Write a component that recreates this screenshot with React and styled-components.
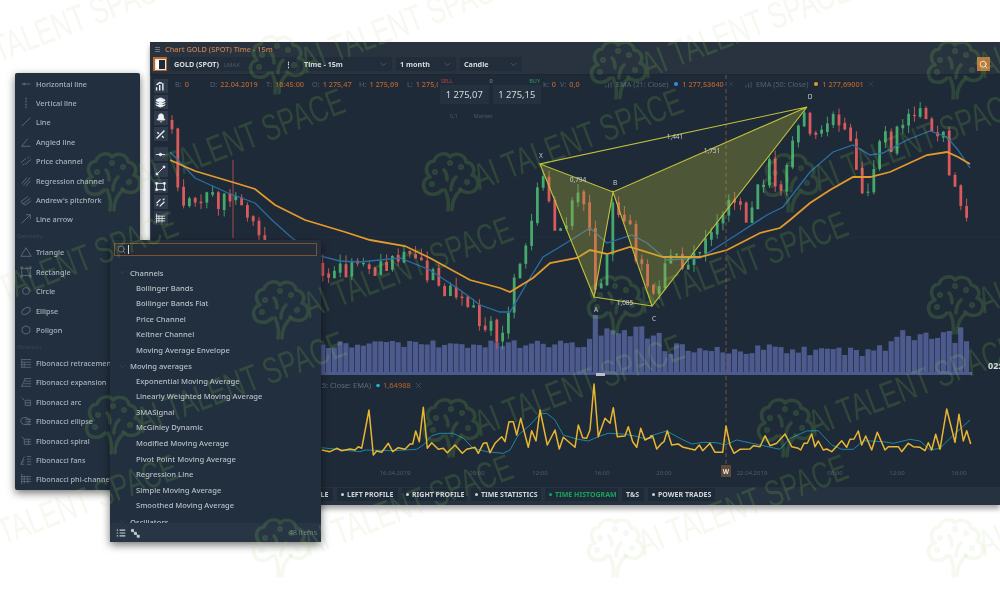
import React from 'react';
import styled, { createGlobalStyle, css } from 'styled-components';
import { Search, ChevronDown, X as XIcon, Bell, Layers } from 'lucide-react';

const Global = createGlobalStyle`
  html, body { margin: 0; padding: 0; background: #fff; }
  #root { width: 1000px; height: 600px; overflow: hidden; }
  * { box-sizing: border-box; }
`;

const Stage = styled.div`
  position: relative;
  width: 1000px;
  height: 600px;
  padding: 42px 0 0 150px;
  overflow: hidden;
  background: #fff;
  font-family: "Noto Sans", "Open Sans", sans-serif;
  filter: blur(0.5px);
`;

const Win = styled.div`
  width: 850px;
  height: 463px;
  display: flex;
  flex-direction: column;
  background: #1f2a38;
  box-shadow: 0 4px 5px rgba(0, 0, 0, 0.35);
`;
const TitleBar = styled.div`
  height: 12px;
  display: flex;
  align-items: center;
  gap: 5px;
  padding: 2px 0 0 5px;
  background: #28333f;
  color: #c9804e;
  font-size: 7.4px;
  font-weight: 500;
  white-space: nowrap;
`;
const Grip = styled.span`
  width: 5px;
  height: 5px;
  background: repeating-linear-gradient(#6b7582 0 1px, #28333f 1px 2px);
`;
const Toolbar = styled.div`
  height: 21px;
  display: flex;
  align-items: center;
  padding: 0 0 0 3px;
  background: #28333f;
  border-bottom: 1px solid #1c2632;
`;
const LogoBtn = styled.div`
  width: 14px;
  height: 14px;
  margin-right: 3px;
  background: #b9692f;
  display: flex;
  align-items: center;
  justify-content: center;
  &::after {
    content: '';
    width: 9px;
    height: 9px;
    background: linear-gradient(90deg, #fff 0 3px, #1f2a38 3px);
    border: 1px solid #f4e2d2;
  }
`;
const Select = styled.div`
  width: ${p => p.$w}px;
  margin-right: 4px;
  height: 14px;
  padding: 0 4px;
  display: flex;
  align-items: center;
  justify-content: space-between;
  background: #222d3b;
  color: #d6dade;
  font-size: 7.2px;
  font-weight: 700;
  white-space: nowrap;
  svg { color: #8b95a1; }
`;
const Dim = styled.span`
  color: #4f5b69;
  font-size: 6px;
  font-weight: 400;
  margin-left: 5px;
`;
const SearchBtn = styled.div`
  margin-left: auto;
  margin-right: 10px;
  width: 13px;
  height: 14px;
  background: #b9763f;
  color: #fff;
  display: flex;
  align-items: center;
  justify-content: center;
`;
const Body = styled.div`
  flex: 1;
  display: flex;
  min-height: 0;
`;
const Side = styled.div`
  width: 20px;
  display: flex;
  flex-direction: column;
  align-items: center;
  padding-top: 4px;
  border-left: 1px solid #3a4553;
`;
const ToolBtn = styled.div`
  width: 14px;
  height: 14px;
  margin-bottom: ${p => p.$gap || 2}px;
  background: #2f3b4b;
  color: #eef1f3;
  display: flex;
  align-items: center;
  justify-content: center;
`;
const Main = styled.div`
  flex: 1;
  display: flex;
  flex-direction: column;
  min-width: 0;
`;
const Plot = styled.div`
  position: relative;
  flex: 1;
  min-height: 0;
  svg.chart { display: block; }
`;
const Legend = styled.div`
  position: absolute;
  top: 3px;
  left: 5px;
  display: flex;
  align-items: center;
  height: 12px;
  font-size: 7.3px;
  color: #55626f;
  white-space: nowrap;
`;
const LegItem = styled.div`
  width: ${p => p.$w}px;
  flex: none;
  display: flex;
  align-items: center;
  gap: 3px;
  overflow: hidden;
`;
const Val = styled.span`
  color: #b9652c;
  font-weight: 500;
`;
const Dot = styled.i`
  width: 4px;
  height: 4px;
  border-radius: 50%;
  margin: 0 1px 0 3px;
  background: ${p => p.$c};
`;
const Widget = styled.div`
  position: absolute;
  left: 268px;
  top: 0;
  width: 105px;
  height: 47px;
  padding: 2px 2px 0;
  background: #1f2a38;
`;
const WTop = styled.div`
  display: flex;
  justify-content: space-between;
  padding: 0 1px;
  font-size: 5.5px;
  line-height: 8px;
  color: #8b95a1;
`;
const Sell = styled.span`color: #b8403f;`;
const Buy = styled.span`color: #2f9f62;`;
const WPrices = styled.div`
  display: flex;
  gap: 4px;
`;
const Price = styled.div`
  flex: 1;
  height: 19px;
  background: #26313f;
  color: #d5d9dd;
  font-size: 9.4px;
  line-height: 19px;
  text-align: center;
  white-space: nowrap;
`;
const WBottom = styled.div`
  display: flex;
  gap: 16px;
  padding: 8px 0 0 10px;
  font-size: 5.5px;
  color: #4d5966;
`;
const Tabs = styled.div`
  height: 18px;
  display: flex;
  align-items: flex-start;
  gap: 4px;
  background: #263240;
  padding: 1px 0 0 88px;
`;
const Tab = styled.div`
  width: ${p => p.$w}px;
  height: 13px;
  flex: none;
  display: flex;
  align-items: center;
  gap: 3px;
  padding: 0 0 0 4px;
  background: #1f2a38;
  font-size: 7px;
  font-weight: 700;
  white-space: nowrap;
  color: ${p => (p.$on ? '#15a45d' : '#cfd4d9')};
  &::before {
    content: '';
    display: ${p => (p.$plain ? 'none' : 'block')};
    width: 3px;
    height: 3px;
    border-radius: 50%;
    background: currentColor;
  }
`;

const Panel = styled.div`
  position: absolute;
  background: #222f3e;
  border-radius: 2px;
  box-shadow: 0 3px 9px rgba(0, 0, 0, 0.55);
  ${p => css`left: ${p.$x}px; top: ${p.$y}px; width: ${p.$w}px; height: ${p.$h}px;`}
`;
const DrawList = styled.div`
  padding-top: 1px;
  display: flex;
  flex-direction: column;
`;
const DrawItem = styled.div`
  height: 19.4px;
  display: flex;
  align-items: center;
  gap: 4px;
  padding-left: 5px;
  color: #aab3bc;
  font-size: 7.3px;
  font-weight: 500;
  white-space: nowrap;
  overflow: hidden;
  svg { flex: none; color: #5d6977; }
`;
const GroupLabel = styled.div`
  height: 13.6px;
  line-height: 14px;
  padding-left: 2px;
  font-size: 5.5px;
  color: #3b4857;
`;
const SearchBox = styled.div`
  height: 13px;
  margin: 3px 4px 0;
  display: flex;
  align-items: center;
  gap: 2px;
  padding-left: 2px;
  background: #232c37;
  border: 1px solid #7a5230;
  color: #7f8994;
  &::after {
    content: '';
    width: 1px;
    height: 9px;
    background: #d6dade;
  }
`;
const IndList = styled.div`
  height: 258px;
  margin-top: 9px;
  overflow: hidden;
`;
const Group = styled.div`
  height: 15.55px;
  display: flex;
  align-items: center;
  gap: 3px;
  padding-left: 8px;
  color: #b9c0c8;
  font-size: 7.6px;
  font-weight: 500;
  svg { color: #4d5966; }
`;
const Ind = styled.div`
  height: 15.55px;
  line-height: 15.55px;
  padding-left: 26px;
  color: #b8bfc7;
  font-size: 7.6px;
  font-weight: 500;
  white-space: nowrap;
`;
const Foot = styled.div`
  height: 19px;
  display: flex;
  align-items: center;
  gap: 4px;
  padding: 0 4px 0 6px;
  background: #283544;
  color: #c5ccd3;
`;
const Count = styled.span`
  margin-left: auto;
  color: #6f7b88;
  font-size: 7px;
`;

const Mark = styled.div`
  position: absolute;
  inset: 0;
  pointer-events: none;
  color: ${p => p.$c};
  mix-blend-mode: ${p => p.$blend};
`;
const MarkItem = styled.div`
  position: absolute;
  left: ${p => p.$x - 30}px;
  top: ${p => p.$y - 32}px;
  width: 60px;
  height: 64px;
`;
const MarkText = styled.span`
  position: absolute;
  left: 62px;
  top: 8px;
  font-family: "Liberation Sans", sans-serif;
  font-size: 37px;
  line-height: 40px;
  white-space: nowrap;
  transform-origin: 0 100%;
  transform: rotate(-21deg) scaleX(0.7);
`;

/* ---------- data ---------- */
function rng(seed) {
  let a = seed;
  return () => {
    a |= 0; a = (a + 0x6d2b79f5) | 0;
    let t = Math.imul(a ^ (a >>> 15), 1 | a);
    t = (t + Math.imul(t ^ (t >>> 7), 61 | t)) ^ t;
    return ((t ^ (t >>> 14)) >>> 0) / 4294967296;
  };
}
const lerp = (pts, x) => {
  if (x <= pts[0][0]) return pts[0][1];
  for (let i = 1; i < pts.length; i++) {
    if (x <= pts[i][0]) {
      const [a, b] = pts[i - 1], [c, d] = pts[i];
      return b + ((d - b) * (x - a)) / (c - a);
    }
  }
  return pts[pts.length - 1][1];
};
const pricePath = [[172,128],[176,170],[180,205],[190,205],[200,195],[215,200],[230,205],[245,205],[255,232],[270,250],[320,268],[340,272],[355,262],[375,272],[392,262],[410,250],[422,265],[440,285],[460,300],[480,320],[500,335],[507,325],[512,295],[522,250],[532,215],[540,165],[545,195],[552,215],[560,235],[568,225],[578,190],[585,215],[590,240],[595,295],[605,280],[610,225],[613,195],[620,215],[630,230],[640,265],[652,300],[662,280],[668,262],[680,262],[690,268],[700,252],[712,235],[722,215],[728,205],[740,205],[745,215],[755,195],[765,180],[770,165],[780,205],[787,165],[795,135],[800,125],[807,120],[812,130],[820,125],[830,125],[838,122],[848,130],[855,160],[860,180],[868,192],[875,165],[880,145],[887,135],[893,148],[900,125],[910,120],[915,118],[925,108],[930,118],[935,128],[940,150],[945,135],[948,165],[955,190],[963,210],[972,237]];
const orange = [[170,160],[195,171],[232,182],[255,189],[275,205],[305,220],[345,232],[370,240],[405,246],[430,258],[470,280],[500,288],[510,292],[533,278],[550,263],[577,258],[590,250],[607,254],[630,247],[663,257],[700,257],[727,250],[760,233],[780,228],[790,220],[810,203],[830,190],[853,177],[870,177],[890,172],[927,155],[947,152],[958,157],[970,164]];
const blue = [[170,152],[178,160],[195,178],[228,193],[255,203],[272,220],[292,238],[320,256],[340,261],[360,262],[400,258],[430,270],[460,290],[480,305],[500,312],[510,312],[527,283],[543,257],[563,245],[590,228],[607,243],[632,235],[647,243],[667,260],[700,258],[733,237],[767,215],[783,207],[790,198],[810,172],[833,152],[853,145],[870,155],[883,153],[907,140],[930,131],[947,137],[958,150],[970,168]];
const candles = [];
const vols = [];
{
  const r = rng(11);
  let prev = 120;
  for (let i = 0; i < 138; i++) {
    const x = 172 + i * 5.8;
    const c = lerp(pricePath, x) + (r() - 0.5) * 20;
    const hi = Math.min(prev, c) - r() * 9;
    const lo = Math.max(prev, c) + r() * 9;
    candles.push({ x, o: prev, c, hi, lo, up: c < prev });
    prev = c + (r() - 0.5) * 3;
    let h = 27 + r() * 8;
    if (x > 585 && x < 660) h = 36 + r() * 14;
    if (x > 660 && x < 800) h = 21 + r() * 11;
    if (x > 800 && x < 890) h = 18 + r() * 12;
    if (x > 890) h = 32 + r() * 16;
    if (Math.abs(x - 594) < 3) h = 60;
    vols.push({ x, h });
  }
}
const yellowA = [[35,240],[60,245],[80,235],[95,242],[120,237],[135,240],[145,230],[155,235],[177,120],[190,255],[200,243],[215,247],[235,220],[248,245],[265,233],[285,238],[300,222],[308,222],[317,183],[328,215],[340,112],[352,235],[365,218],[385,238],[400,235],[412,248],[435,225],[457,250],[470,238],[495,232],[505,250],[520,220],[530,218],[540,248],[555,220],[575,200],[585,215],[597,155],[610,155],[620,195],[632,145],[655,232],[665,182],[678,213],[690,120],[712,225],[735,180],[748,237],[760,202],[795,232],[805,165],[818,203],[830,205],[840,180],[852,42],[865,200],[885,145],[900,160],[910,113],[922,200],[945,198],[955,170],[968,215],[980,232],[992,175],[1005,210],[1028,198]];
const yellowB = [[0,198],[8,198],[20,237],[35,220],[42,215],[52,182],[65,225],[85,222],[100,232],[135,240],[148,225],[158,242],[180,220],[195,247],[218,247],[228,168],[240,225],[252,250],[270,238],[300,237],[310,227],[330,230],[345,197],[360,227],[380,220],[405,192],[425,230],[445,235],[452,240],[462,220],[472,220],[485,192],[495,230],[505,213],[520,240],[530,237],[545,245],[575,212],[590,232],[600,208],[612,207],[625,183],[635,225],[647,198],[665,240],[682,187],[705,240],[715,230],[745,230],[755,245],[775,220],[790,230],[810,232],[825,242],[835,218],[845,240],[857,193],[870,238],[890,117],[915,217],[927,133],[940,213],[950,182],[962,222]];
const tealA = [[35,233],[100,240],[150,245],[165,240],[250,242],[320,238],[340,225],[365,197],[390,190],[430,190],[460,205],[490,235],[530,245],[580,250],[600,240],[625,195],[660,165],[690,132],[710,130],[735,150],[760,195],[800,207],[835,213],[870,198],[895,190],[940,192],[975,198],[1000,205],[1028,205]];
const tealB = [[0,198],[50,183],[90,205],[125,222],[160,217],[200,218],[225,225],[260,210],[330,225],[390,238],[420,205],[470,183],[505,182],[545,225],[575,238],[610,238],[640,212],[700,215],[730,220],[780,208],[810,213],[840,240],[870,235],[900,205],[960,150]];
const toA = p => p.map(([x, y]) => `${(310 + x / 3).toFixed(1)},${(370 + y / 3).toFixed(1)}`);
const toB = p => p.map(([x, y]) => `${(650 + x / 3).toFixed(1)},${(370 + y / 3).toFixed(1)}`);
const pts = p => p.map(q => q.join(',')).join(' ');
const G = '#45a86d', R = '#d95a5a';

const axis = [[395,'16.04.2019'],[477,'08:00'],[540,'12:00'],[602,'16:00'],[664,'20:00'],[752,'22.04.2019'],[835,'08:00'],[897,'12:00'],[959,'16:00']];
const fibLabels = [[541,158,'X'],[596,312,'A'],[615,185,'B'],[654,321,'C'],[810,99,'D']];
const ratios = [[675,138.5,'1,441'],[712,152.5,'1,751'],[578,181.5,'0,794'],[625,305,'1,085']];

const Chart = () => (
  <svg className="chart" width="830" height="412" viewBox="170 75 830 412">
    <line x1="170" x2="1000" y1="237" y2="237" stroke="#263444" strokeWidth="0.6" />
    <g fill="#4d5a8e">
      {vols.map((v, i) => <rect key={i} x={v.x - 2.6} y={375 - v.h} width="5.1" height={v.h} />)}
      <rect x="170" y="372" width="802" height="3" />
    </g>
    <rect x="596" y="373" width="9" height="3" fill="#b9c0c8" />
    {candles.map((c, i) => (
      <g key={i} fill={c.up ? G : R} stroke={c.up ? G : R}>
        <line x1={c.x} x2={c.x} y1={c.hi} y2={c.lo} strokeWidth="0.9" />
        <rect x={c.x - 1.4} y={Math.min(c.o, c.c)} width="2.8" height={Math.abs(c.o - c.c) + 1} stroke="none" />
      </g>
    ))}
    <line x1="233" x2="233" y1="160" y2="238" stroke={R} strokeWidth="1" opacity="0.7" />
    <polyline points={pts(blue)} fill="none" stroke="#2a6fa3" strokeWidth="1.3" />
    <polyline points={pts(orange)} fill="none" stroke="#e39a2b" strokeWidth="1.8" />
    <line x1="726" x2="726" y1="75" y2="465" stroke="#7a5a44" strokeWidth="0.9" strokeDasharray="4 3" />
    <polygon points="540,164 594,297 613,192" fill="#b0b03a" fillOpacity="0.33" />
    <polygon points="613,192 652,306 807,107" fill="#b0b03a" fillOpacity="0.33" />
    <polyline points="540,164 594,297 613,192 652,306 807,107 613,192 540,164 807,107" fill="none" stroke="#c2c23a" strokeWidth="1.1" />
    <line x1="594" y1="297" x2="652" y2="306" stroke="#c2c23a" strokeWidth="1.1" />
    <g fontFamily="Noto Sans, sans-serif" fontSize="6.5" fill="#c6ccd2" textAnchor="middle">
      {fibLabels.map(([x, y, t]) => <text key={t} x={x} y={y}>{t}</text>)}
      {ratios.map(([x, y, t]) => <text key={t} x={x} y={y}>{t}</text>)}
    </g>
    <text x="988" y="369" fontFamily="Noto Sans, sans-serif" fontSize="9" fontWeight="700" fill="#d9dde1">02:</text>
    <polyline points={toA(tealA).join(' ')} fill="none" stroke="#1f86a3" strokeWidth="1" />
    <polyline points={toB(tealB).join(' ')} fill="none" stroke="#1f86a3" strokeWidth="1" />
    <polyline points={toA(yellowA).join(' ')} fill="none" stroke="#e8b631" strokeWidth="1.5" strokeLinejoin="round" />
    <polyline points={toB(yellowB).join(' ')} fill="none" stroke="#e8b631" strokeWidth="1.5" strokeLinejoin="round" />
    <g fontFamily="Noto Sans, sans-serif" fontSize="6" fill="#4f5b68" textAnchor="middle">
      {axis.map(([x, t]) => <text key={x} x={x} y="475">{t}</text>)}
    </g>
    <rect x="721" y="465" width="10" height="12" fill="#5f4a3a" />
    <text x="726" y="474" fontFamily="Noto Sans, sans-serif" fontSize="6.5" fontWeight="700" fill="#e8e3de" textAnchor="middle">W</text>
    <g fontFamily="Noto Sans, sans-serif" fontSize="7.5">
      <text x="371" y="388" textAnchor="end" fill="#5f6b78">15: Close: EMA)</text>
      <circle cx="378" cy="385.5" r="1.8" fill="#21b3c9" />
      <text x="383" y="388" fill="#b9652c">1,64988</text>
      <path d="M416 383l5 5m0-5l-5 5" stroke="#4d5966" strokeWidth="0.7" />
    </g>
  </svg>
);

const Ic = ({ children, s = 12 }) => (
  <svg width={s} height={s} viewBox="0 0 14 14" fill="none" stroke="currentColor" strokeWidth="1.1">{children}</svg>
);
const icons = {
  h: <><path d="M2 7h10" /><circle cx="5" cy="7" r="1" fill="currentColor" /></>,
  v: <path d="M7 1v12" strokeDasharray="2 1.4" strokeWidth="1.5" />,
  l: <path d="M2 12L12 2" />,
  a: <path d="M2 12L9 3M2 12h10" />,
  pc: <path d="M1 9l6-5M6 11l7-6M3 12l2-2M9 4l2-2" />,
  rc: <path d="M2 10l6-7M4 12l8-9M7 13l5-6" />,
  pf: <path d="M1 9l8-6M3 12l9-7M6 13l7-5M1 9l5 4" />,
  ar: <path d="M2 12L12 2M7 2h5v5" />,
  tr: <path d="M7 2l6 10H1z" />,
  re: <path d="M2 3h10v8H2z M1 1h2v2H1z M11 1h2v2h-2z M1 11h2v2H1z M11 11h2v2h-2z" />,
  ci: <circle cx="7" cy="7" r="4" />,
  el: <ellipse cx="7" cy="7" rx="5.5" ry="3.4" transform="rotate(-35 7 7)" />,
  po: <path d="M7 2l4.5 2.5v5L7 12 2.5 9.5v-5z" />,
  fr: <path d="M1 3h12M1 6h12M1 9h12M1 12h12M2 3v9M5 6v6" strokeWidth="1" />,
  fe: <path d="M5 3h8M5 6h8M5 9h8M1 12h12M2 12l4-9" strokeWidth="1" />,
  fa: <path d="M2 2l3 3M6 5h7M6 8h7M6 11h7M6 5v6M12 5v6" strokeWidth="1" />,
  fl: <><ellipse cx="6" cy="7" rx="5" ry="4" /><path d="M6 5h7M6 8h7M6 11h7" /></>,
  fs: <path d="M2 2l3 3M5 5h8M5 8h8M5 11h8M5 5v6M10 5v6" strokeWidth="1" />,
  ff: <path d="M1 12l4-9M1 12l4-5M1 12h4M8 3h5M8 6h5M8 9h5M8 12h5" strokeWidth="1" />,
  fp: <path d="M2 1v12M5 3v9M1 4h12M1 7h12M1 10h12M9 4v8" strokeWidth="1" />,
};
const group1 = [['h','Horizontal line'],['v','Vertical line'],['l','Line'],['a','Angled line'],['pc','Price channel'],['rc','Regression channel'],['pf',"Andrew's pitchfork"],['ar','Line arrow']];
const group2 = [['tr','Triangle'],['re','Rectangle'],['ci','Circle'],['el','Ellipse'],['po','Poligon']];
const group3 = [['fr','Fibonacci retracement'],['fe','Fibonacci expansion'],['fa','Fibonacci arc'],['fl','Fibonacci ellipse'],['fs','Fibonacci spiral'],['ff','Fibonacci fans'],['fp','Fibonacci phi-channel']];
const Draws = ({ items }) => items.map(([k, t]) => (
  <DrawItem key={t}><Ic s={12}>{icons[k]}</Ic>{t}</DrawItem>
));

const channels = ['Bollinger Bands','Bollinger Bands Flat','Price Channel','Keltner Channel','Moving Average Envelope'];
const mas = ['Exponential Moving Average','Linearly Weighted Moving Average','3MASignal','McGinley Dynamic','Modified Moving Average','Pivot Point Moving Average','Regression Line','Simple Moving Average','Smoothed Moving Average'];
const Chev = () => <ChevronDown size={9} strokeWidth={1} />;

const tree = (
  <svg width="60" height="64" viewBox="0 0 60 64" fill="none" stroke="currentColor" strokeWidth="3.6" strokeLinecap="round" strokeLinejoin="round">
    <path d="M22 40c-5 6-16 6-18-2-2-6 2-10 6-11-6-6-4-15 4-16 2-7 12-10 16-4 5-5 15-3 16 5 7 1 10 8 6 13 7 2 8 12 2 16-5 3-11 1-14-2" />
    <path d="M28 60c1-7 0-14-3-20M32 60c0-9 3-15 9-20M27 30c0-5-1-8-3-10M31 40c0-6 2-10 5-13" />
    <circle cx="15" cy="22" r="1.2" /><circle cx="41" cy="17" r="1.2" /><circle cx="30" cy="13" r="1.2" /><circle cx="47" cy="32" r="1.2" /><circle cx="12" cy="34" r="1.2" />
  </svg>
);
const marks = [
  [277,65],[618,70],[955,70],[-60,65],
  [112,182],[450,182],[790,183],
  [-55,305],[280,310],[615,305],[955,305],
  [113,425],[451,428],[785,428],
  [-55,548],[280,548],[615,548],[955,548],
];
const Watermark = ({ c, blend }) => (
  <Mark $c={c} $blend={blend} aria-hidden="true">
    {marks.map(([x, y]) => (
      <MarkItem key={`${x}-${y}`} $x={x} $y={y}>
        {tree}
        <MarkText>AI TALENT SPACE</MarkText>
      </MarkItem>
    ))}
  </Mark>
);

export default function App() {
  return (
    <Stage>
      <Global />
      <Win>
        <TitleBar><Grip />Chart GOLD (SPOT) Time - 15m</TitleBar>
        <Toolbar>
          <LogoBtn />
          <Select $w={126}><span>GOLD (SPOT)<Dim>LMAX</Dim></span><span>⋮</span></Select>
          <Select $w={92}>Time - 15m<Chev /></Select>
          <Select $w={60}>1 month<Chev /></Select>
          <Select $w={62}>Candle<Chev /></Select>
          <SearchBtn><Search size={9} strokeWidth={2} /></SearchBtn>
        </Toolbar>
        <Body>
          <Side>
            <ToolBtn><Ic s={11}><path d="M2 12V8M6 12V5M10 12V3M2 5l4-3 3 1" strokeWidth="1.8" /></Ic></ToolBtn>
            <ToolBtn><Layers size={11} fill="currentColor" /></ToolBtn>
            <ToolBtn><Bell size={10} fill="currentColor" /></ToolBtn>
            <ToolBtn $gap={6}><Ic s={11}><path d="M2 12L12 2M3 4l2 2M9 9l2 2" strokeWidth="1.8" /></Ic></ToolBtn>
            <ToolBtn><Ic s={11}><path d="M1 7h12" /><circle cx="7" cy="7" r="1.6" fill="currentColor" /></Ic></ToolBtn>
            <ToolBtn><Ic s={11}><path d="M2 12L12 2" /><circle cx="2.5" cy="11.5" r="1.3" fill="currentColor" /><circle cx="11.5" cy="2.5" r="1.3" fill="currentColor" /></Ic></ToolBtn>
            <ToolBtn><Ic s={11}><path d="M2 3h10v8H2z" /><path d="M1 2h2v2H1zM11 2h2v2h-2zM1 10h2v2H1zM11 10h2v2h-2z" fill="currentColor" /></Ic></ToolBtn>
            <ToolBtn><Ic s={11}><path d="M2 8l5-5M6 12l6-6M2 11l2-2M10 4l2-2" strokeWidth="1.5" /></Ic></ToolBtn>
            <ToolBtn><Ic s={11}>{icons.fp}</Ic></ToolBtn>
          </Side>
          <Main>
            <Plot>
              <Chart />
              <Legend>
                <LegItem $w={35}>B: <Val>0</Val></LegItem>
                <LegItem $w={56}>D: <Val>22.04.2019</Val></LegItem>
                <LegItem $w={46}>T: <Val>16:45:00</Val></LegItem>
                <LegItem $w={47}>O: <Val>1 275,47</Val></LegItem>
                <LegItem $w={48}>H: <Val>1 275,69</Val></LegItem>
                <LegItem $w={136}>L: <Val>1 275,07</Val></LegItem>
                <LegItem $w={17}>k: <Val>0</Val></LegItem>
                <LegItem $w={44}>V: <Val>0,0</Val></LegItem>
                <LegItem $w={140}>
                  <Ic s={9}><path d="M3 12V8M7 12V5M11 12V3" /></Ic>
                  EMA (21: Close)<Dot $c="#2f8fe0" /><Val>1 277,53640</Val><XIcon size={8} strokeWidth={1} />
                </LegItem>
                <LegItem $w={140}>
                  <Ic s={9}><path d="M3 12V8M7 12V5M11 12V3" /></Ic>
                  EMA (50: Close)<Dot $c="#e39a2b" /><Val>1 277,69001</Val><XIcon size={8} strokeWidth={1} />
                </LegItem>
              </Legend>
              <Widget>
                <WTop><Sell>SELL</Sell><span>0</span><Buy>BUY</Buy></WTop>
                <WPrices><Price>1 275,07</Price><Price>1 275,15</Price></WPrices>
                <WBottom><span>0,1</span><span>Market</span></WBottom>
              </Widget>
            </Plot>
            <Tabs>
              <Tab $w={75}>VOLUME PROFILE</Tab>
              <Tab $w={61}>LEFT PROFILE</Tab>
              <Tab $w={65}>RIGHT PROFILE</Tab>
              <Tab $w={70}>TIME STATISTICS</Tab>
              <Tab $w={73} $on>TIME HISTOGRAM</Tab>
              <Tab $w={22} $plain>T&amp;S</Tab>
              <Tab $w={67}>POWER TRADES</Tab>
            </Tabs>
          </Main>
        </Body>
      </Win>

      <Panel $x={15} $y={73} $w={125} $h={417}>
        <DrawList>
          <Draws items={group1} />
          <GroupLabel>Geometry</GroupLabel>
          <Draws items={group2} />
          <GroupLabel>Fibonacci</GroupLabel>
          <Draws items={group3} />
        </DrawList>
      </Panel>

      <Panel $x={110} $y={240} $w={211} $h={302}>
        <SearchBox><Search size={9} /></SearchBox>
        <IndList>
          <Group><Chev />Channels</Group>
          {channels.map(t => <Ind key={t}>{t}</Ind>)}
          <Group><Chev />Moving averages</Group>
          {mas.map(t => <Ind key={t}>{t}</Ind>)}
          <Group><Chev />Oscillators</Group>
        </IndList>
        <Foot>
          <Ic s={10}><path d="M5 3h8M5 7h8M5 11h8M1 3h2M1 7h2M1 11h2" strokeWidth="1.7" /></Ic>
          <Ic s={10}><path d="M2 2h3v3H2zM6 6h3v3H6zM10 10h3v3h-3zM4 4l4 4M8 8l4 4" fill="currentColor" strokeWidth="1.2" /></Ic>
          <Count>48 items</Count>
        </Foot>
      </Panel>

      <Watermark c="rgba(95,160,40,0.07)" blend="normal" />
      <Watermark c="rgb(14,26,4)" blend="screen" />
    </Stage>
  );
}
